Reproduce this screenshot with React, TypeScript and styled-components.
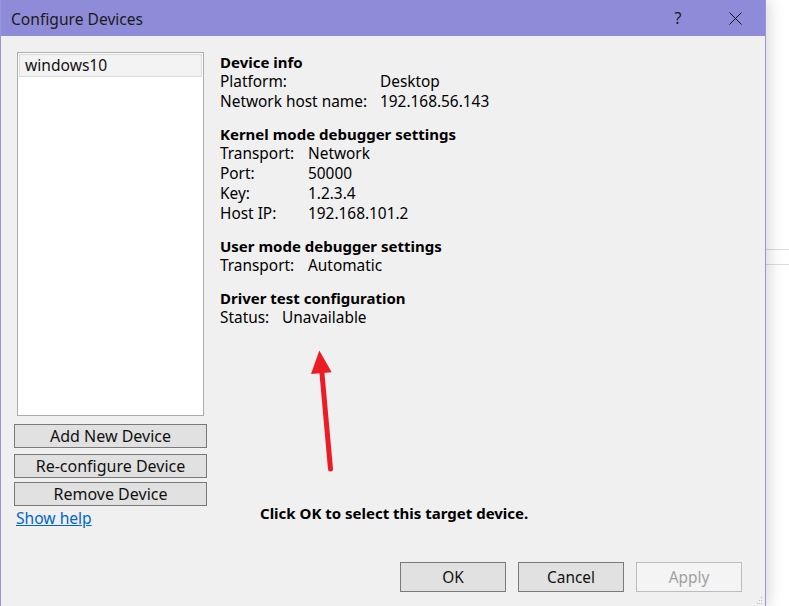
import { FC } from "react";
import styled, { createGlobalStyle } from "styled-components";

const Colors = {
  title: "#8e8cd8",
  frame: "#9896dc",
  face: "#f0f0f0",
  text: "#000000",
  button: "#e1e1e1",
  buttonBorder: "#7a7a7a",
  link: "#0066cc",
  arrow: "#ec1c24",
};

const GlobalStyle = createGlobalStyle`
  html, body {
    margin: 0;
    padding: 0;
    background: #ffffff;
  }
  body {
    font-family: "Noto Sans", "Liberation Sans", sans-serif;
    font-size: 15.4px;
    color: ${Colors.text};
  }
`;

const Screen = styled.div`
  position: relative;
  display: flex;
  width: 789px;
  height: 606px;
  overflow: hidden;
`;

const Dialog = styled.div`
  display: flex;
  flex-direction: column;
  flex: 0 0 766px;
  box-sizing: border-box;
  border-left: 1px solid ${Colors.frame};
  border-right: 1px solid ${Colors.frame};
  background: ${Colors.face};
  box-shadow: 3px 0 14px rgba(0, 0, 0, 0.16);
  z-index: 1;
`;

const TitleBar = styled.div`
  display: flex;
  align-items: center;
  height: 36px;
  padding-left: 10px;
  background: ${Colors.title};
`;

const Title = styled.span`
  flex: 1;
  font-size: 15.6px;
  color: #1b1b1b;
  line-height: 20px;
  padding-top: 1px;
`;

const TitleButton = styled.span<{ $width: number; $after: number }>`
  display: flex;
  align-items: center;
  justify-content: center;
  width: ${(p) => p.$width}px;
  height: 36px;
  margin-right: ${(p) => p.$after}px;
  color: #1b1b1b;
  font-size: 16px;
`;

const Main = styled.div`
  display: flex;
  gap: 13px;
  padding: 15px 0 0 13px;
`;

const LeftColumn = styled.div`
  display: flex;
  flex-direction: column;
  width: 193px;
  margin-top: 1px;
`;

const ListBox = styled.div`
  height: 364px;
  margin: 0 3px;
  box-sizing: border-box;
  border: 1px solid #acacac;
  background: #ffffff;
  padding: 1px;
`;

const ListItem = styled.div<{ $selected?: boolean }>`
  height: 23px;
  box-sizing: border-box;
  padding-left: 5px;
  line-height: 21px;
  font-size: 15.6px;
  border: 1px solid ${(p) => (p.$selected ? "#dadada" : "transparent")};
  background: ${(p) => (p.$selected ? "#f3f3f3" : "transparent")};
  color: #111;
`;

const Button = styled.button<{ $width?: number; $height?: number; $top?: number; $size?: number; $disabled?: boolean }>`
  width: ${(p) => p.$width ?? 193}px;
  height: ${(p) => p.$height ?? 24}px;
  margin-top: ${(p) => p.$top ?? 0}px;
  padding: ${(p) => (p.$height ? "2px 0 0" : "0")};
  font-family: inherit;
  font-size: ${(p) => p.$size ?? 16}px;
  line-height: 20px;
  color: ${(p) => (p.$disabled ? "#a0a0a0" : "#111")};
  background: ${(p) => (p.$disabled ? "#f4f4f4" : Colors.button)};
  border: 1px solid ${(p) => (p.$disabled ? "#bcbcbc" : Colors.buttonBorder)};
  border-radius: 0;
`;

const HelpLink = styled.a`
  margin: 2px 0 0 2px;
  line-height: 20px;
  font-size: 15.6px;
  color: ${Colors.link};
  text-decoration: underline;
  align-self: flex-start;
`;

const RightColumn = styled.div`
  display: flex;
  flex-direction: column;
  flex: 1;
  padding-top: 1px;
`;

const Group = styled.section`
  margin-bottom: 12px;
  line-height: 20px;
`;

const GroupTitle = styled.div`
  font-weight: 700;
  font-size: 15px;
`;

const InfoRow = styled.div<{ $label: number }>`
  display: grid;
  grid-template-columns: ${(p) => p.$label}px auto;
  white-space: nowrap;
`;

const Hint = styled.div`
  margin: auto 0 5px 40px;
  font-weight: 700;
  font-size: 15px;
  line-height: 20px;
`;

const Footer = styled.div`
  display: flex;
  justify-content: flex-end;
  gap: 12px;
  margin-top: 34px;
  padding-right: 23px;
`;

const Backdrop = styled.div`
  flex: 1;
  display: flex;
  flex-direction: column;
  padding-top: 249px;
  background: #ffffff;
`;

const Rule = styled.div<{ $gap?: number }>`
  height: 1px;
  margin-top: ${(p) => p.$gap ?? 0}px;
  background: #dcdce6;
`;

const Annotation = styled.svg`
  position: absolute;
  left: 300px;
  top: 340px;
  z-index: 2;
`;

const Grip = styled.svg`
  position: absolute;
  left: 754px;
  top: 596px;
  z-index: 2;
`;

type Row = [string, string];

const groups: { title: string; label: number; rows: Row[] }[] = [
  {
    title: "Device info",
    label: 160,
    rows: [
      ["Platform:", "Desktop"],
      ["Network host name:", "192.168.56.143"],
    ],
  },
  {
    title: "Kernel mode debugger settings",
    label: 88,
    rows: [
      ["Transport:", "Network"],
      ["Port:", "50000"],
      ["Key:", "1.2.3.4"],
      ["Host IP:", "192.168.101.2"],
    ],
  },
  {
    title: "User mode debugger settings",
    label: 88,
    rows: [["Transport:", "Automatic"]],
  },
  {
    title: "Driver test configuration",
    label: 62,
    rows: [["Status:", "Unavailable"]],
  },
];

const CloseIcon: FC = () => (
  <svg width="13" height="13" viewBox="0 0 13 13">
    <path d="M0.5 0.5 L12.5 12.5 M12.5 0.5 L0.5 12.5" stroke="#111" strokeWidth="1" />
  </svg>
);

export const App: FC = () => {
  return (
    <Screen>
      <GlobalStyle />
      <Dialog>
        <TitleBar>
          <Title>Configure Devices</Title>
          <TitleButton $width={34} $after={17}>?</TitleButton>
          <TitleButton $width={46} $after={7}>
            <CloseIcon />
          </TitleButton>
        </TitleBar>
        <Main>
          <LeftColumn>
            <ListBox>
              <ListItem $selected>windows10</ListItem>
            </ListBox>
            <Button $top={8}>Add New Device</Button>
            <Button $top={6}>Re-configure Device</Button>
            <Button $top={4}>Remove Device</Button>
            <HelpLink href="#">Show help</HelpLink>
          </LeftColumn>
          <RightColumn>
            {groups.map((group) => (
              <Group key={group.title}>
                <GroupTitle>{group.title}</GroupTitle>
                {group.rows.map(([label, value]) => (
                  <InfoRow key={label} $label={group.label}>
                    <span>{label}</span>
                    <span>{value}</span>
                  </InfoRow>
                ))}
              </Group>
            ))}
            <Hint>Click OK to select this target device.</Hint>
          </RightColumn>
        </Main>
        <Footer>
          <Button $width={106} $height={30} $size={15.4}>OK</Button>
          <Button $width={106} $height={30} $size={15.4}>Cancel</Button>
          <Button $width={106} $height={30} $size={15.4} $disabled>
            Apply
          </Button>
        </Footer>
      </Dialog>
      <Backdrop>
        <Rule />
        <Rule $gap={14} />
      </Backdrop>
      <Annotation width="40" height="135" viewBox="0 0 40 135">
        <path d="M21.5 28 L30.5 129" stroke={Colors.arrow} strokeWidth="5" strokeLinecap="round" />
        <path d="M19.3 10.5 L11 34 L31.7 32.3 Z" fill={Colors.arrow} />
      </Annotation>
      <Grip width="10" height="10" viewBox="0 0 10 10">
        <g fill="#b8b8c8">
          <rect x="7" y="1" width="1" height="1" />
          <rect x="5" y="4" width="1" height="1" />
          <rect x="7" y="4" width="1" height="1" />
          <rect x="3" y="7" width="1" height="1" />
          <rect x="5" y="7" width="1" height="1" />
          <rect x="7" y="7" width="1" height="1" />
        </g>
      </Grip>
    </Screen>
  );
};

export default App;
